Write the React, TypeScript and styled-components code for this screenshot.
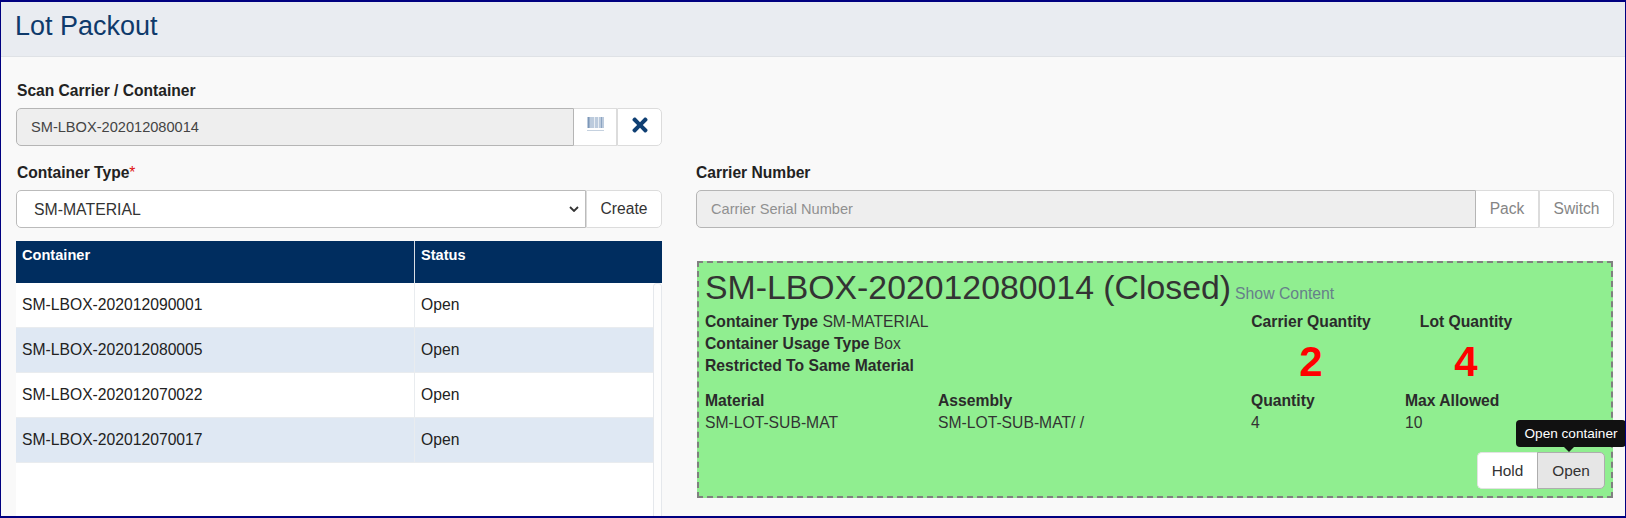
import React from "react";
import styled, { createGlobalStyle } from "styled-components";
import { FaTimes } from "react-icons/fa";

const GlobalStyle = createGlobalStyle`
    html, body {
        margin: 0;
        padding: 0;
        background: #fff;
    }
    * {
        box-sizing: border-box;
    }
    body {
        font-family: "Liberation Sans", Arial, sans-serif;
        font-size: 15.7px;
        color: #333;
    }
`;

const Page = styled.div`
    position: relative;
    width: 1626px;
    height: 518px;
    border: 1px solid #000080;
    border-width: 2px 1px 2px 1px;
    background: #f9f9f9;
    overflow: hidden;
`;

const Header = styled.header`
    height: 55px;
    padding: 6px 14px 0;
    background: #e9ecf1;
    border-bottom: 1px solid #dfe2e6;
`;

const Title = styled.h1`
    margin: 0;
    font-size: 27px;
    font-weight: 400;
    line-height: 36px;
    color: #0f3a6b;
`;

const Body = styled.main`
    padding: 24px 12px 0 15px;
`;

const ScanBlock = styled.section`
    width: 646px;
    margin-bottom: 17px;
`;

const Label = styled.label<{ $flush?: boolean }>`
    display: block;
    height: 20px;
    margin: 0 0 7px ${(p) => (p.$flush ? 0 : 1)}px;
    font-size: 15.6px;
    font-weight: 700;
    line-height: 20px;
    color: #222;
`;

const Required = styled.span`
    font-weight: 400;
    color: #e01010;
`;

const Columns = styled.div`
    display: grid;
    grid-template-columns: 646px 918px;
    column-gap: 34px;
`;

const InputGroup = styled.div`
    display: flex;
    height: 38px;
    background: #fff;
    border-radius: 5px;
`;

const ReadInput = styled.input`
    flex: 1;
    min-width: 0;
    height: 100%;
    padding: 0 14px;
    font: inherit;
    font-size: 14.6px;
    color: #444;
    background: #eee;
    border: 1px solid #b5b5b5;
    border-radius: 5px 0 0 5px;
    outline: none;

    &::placeholder {
        color: #909090;
        opacity: 1;
    }
`;

const AddonButton = styled.button<{ $width: number; $muted?: boolean; $last?: boolean }>`
    flex: none;
    display: flex;
    align-items: center;
    justify-content: center;
    width: ${(p) => p.$width}px;
    height: 100%;
    padding: 0;
    font: inherit;
    font-size: 15.6px;
    color: ${(p) => (p.$muted ? "#858585" : "#333")};
    background: #fff;
    border: 1px solid #dcdcdc;
    border-left: ${(p) => (p.$last ? "1px solid #dcdcdc" : "0")};
    border-radius: ${(p) => (p.$last ? "0 5px 5px 0" : "0")};
`;

const IconHolder = styled.span`
    display: flex;
    margin-top: -5px;
`;

const SelectWrap = styled.div`
    position: relative;
    display: flex;
    flex: 1;
    min-width: 0;
`;

const TypeSelect = styled.select`
    flex: 1;
    min-width: 0;
    height: 100%;
    padding: 0 24px 0 17px;
    font: inherit;
    font-size: 15.8px;
    color: #333;
    background: #fff;
    border: 1px solid #bbb;
    border-radius: 5px 0 0 5px;
    outline: none;
    appearance: none;
`;

const SelectChevron = styled.svg`
    position: absolute;
    top: 16px;
    right: 7px;
    pointer-events: none;
`;

const ListBlock = styled.div`
    margin-top: 13px;
`;

const TableHead = styled.div`
    display: grid;
    grid-template-columns: 399px 1fr;
    height: 42px;
    color: #fff;
    background: #002d5f;
    font-weight: 700;
    font-size: 14.6px;
`;

const HeadCell = styled.div<{ $divided?: boolean }>`
    padding: 5px 6px;
    line-height: 18px;
    border-right: ${(p) => (p.$divided ? "1px solid #d8dde4" : "0")};
`;

const TableBody = styled.div`
    display: flex;
    height: 250px;
    background: #fff;
`;

const Rows = styled.div`
    flex: 1;
`;

const Row = styled.div<{ $striped: boolean }>`
    display: grid;
    grid-template-columns: 399px 1fr;
    height: 45px;
    font-size: 15.7px;
    color: #222;
    background: ${(p) => (p.$striped ? "#dfe8f3" : "#fff")};
    border-bottom: 1px solid #e9ecef;
`;

const Cell = styled.div<{ $divided?: boolean }>`
    padding: 13px 6px 0;
    line-height: 18px;
    border-right: ${(p) => (p.$divided ? "1px solid #e9ecef" : "0")};
`;

const ScrollTrack = styled.div`
    width: 9px;
    background: #fdfdfd;
    border: 1px solid #e5e8ec;
    border-bottom: 0;
    border-radius: 4px 4px 0 0;
`;

const StatusCard = styled.section`
    position: relative;
    height: 237px;
    margin: 33px 1px 0 1px;
    padding: 4px 6px 0;
    background: #90ee90;
    border: 2px dashed #808080;
`;

const CardTitle = styled.div`
    display: flex;
    align-items: baseline;
    gap: 4px;
    height: 42px;
`;

const ContainerName = styled.span`
    font-size: 33.8px;
    line-height: 41px;
    color: #333;
`;

const ShowContent = styled.a`
    font-size: 15.8px;
    color: #66808a;
`;

const SummaryRow = styled.div`
    display: grid;
    grid-template-columns: 546px 155px 150px;
    height: 66px;
    margin-top: 2px;
`;

const InfoLine = styled.div`
    height: 22px;
    line-height: 22px;
    color: #333;
`;

const InfoKey = styled.b`
    color: #2b2b2b;
`;

const QuantityBox = styled.div<{ $width: number; $offset?: number }>`
    display: flex;
    flex-direction: column;
    align-items: center;
    width: ${(p) => p.$width}px;
    margin-left: ${(p) => p.$offset ?? 0}px;
    line-height: 22px;
    white-space: nowrap;
`;

const QuantityNumber = styled.div`
    margin-top: 7px;
    font-size: 42px;
    font-weight: 700;
    line-height: 44px;
    color: #f00;
`;

const DetailGrid = styled.div`
    display: grid;
    grid-template-columns: 233px 313px 154px 150px;
    grid-auto-rows: 22px;
    margin-top: 13px;
    line-height: 22px;
`;

const ActionGroup = styled.div`
    position: absolute;
    right: 6px;
    bottom: 7px;
    display: flex;
    height: 37px;
    font-size: 15.4px;
`;

const ActionButton = styled.button<{ $active?: boolean }>`
    width: ${(p) => (p.$active ? 68 : 60)}px;
    padding: 0;
    font: inherit;
    color: #333;
    background: ${(p) => (p.$active ? "#e6e6e6" : "#fff")};
    border: 1px solid ${(p) => (p.$active ? "#adadad" : "#e2e2e2")};
    border-right: 0;
    border-radius: 5px 0 0 5px;

    &:last-child {
        border-right: 1px solid #adadad;
        border-radius: 0 5px 5px 0;
    }
`;

const Tooltip = styled.div`
    position: absolute;
    left: 1515px;
    top: 418px;
    width: 110px;
    height: 27px;
    font-size: 13.6px;
    line-height: 27px;
    text-align: center;
    color: #fff;
    background: #111;
    border-radius: 4px;

    &::after {
        content: "";
        position: absolute;
        left: 48px;
        top: 27px;
        border: 5px solid transparent;
        border-top-color: #111;
        border-bottom: 0;
    }
`;

const containers = [
    "SM-LBOX-202012090001",
    "SM-LBOX-202012080005",
    "SM-LBOX-202012070022",
    "SM-LBOX-202012070017",
];

function BarcodeIcon() {
    return (
        <svg width="17" height="15" viewBox="0 0 17 15">
            <rect x="0" y="0" width="17" height="11" fill="#bccbdd" />
            <rect x="1" y="0" width="1.5" height="11" fill="#7d97b8" />
            <rect x="7" y="0" width="1" height="11" fill="#e8edf3" />
            <rect x="11" y="0" width="1" height="11" fill="#e8edf3" />
            <rect x="14" y="0" width="1" height="11" fill="#8ea5c2" />
            <rect x="0" y="13" width="17" height="1" fill="#c5d1df" />
        </svg>
    );
}

export default function App() {
    return (
        <>
            <GlobalStyle />
            <Page>
                <Header>
                    <Title>Lot Packout</Title>
                </Header>
                <Body>
                    <ScanBlock>
                        <Label>Scan Carrier / Container</Label>
                        <InputGroup>
                            <ReadInput readOnly value="SM-LBOX-202012080014" />
                            <AddonButton $width={43}>
                                <IconHolder>
                                    <BarcodeIcon />
                                </IconHolder>
                            </AddonButton>
                            <AddonButton $width={45} $last>
                                <IconHolder>
                                    <FaTimes size={22} color="#0f3f73" />
                                </IconHolder>
                            </AddonButton>
                        </InputGroup>
                    </ScanBlock>
                    <Columns>
                        <div>
                            <Label>
                                Container Type<Required>*</Required>
                            </Label>
                            <InputGroup>
                                <SelectWrap>
                                    <TypeSelect defaultValue="SM-MATERIAL">
                                        <option>SM-MATERIAL</option>
                                    </TypeSelect>
                                    <SelectChevron width="10" height="6" viewBox="0 0 10 6">
                                        <path
                                            d="M1 1l4 4 4-4"
                                            fill="none"
                                            stroke="#333"
                                            strokeWidth="1.8"
                                        />
                                    </SelectChevron>
                                </SelectWrap>
                                <AddonButton $width={76} $last>
                                    Create
                                </AddonButton>
                            </InputGroup>
                            <ListBlock>
                                <TableHead>
                                    <HeadCell $divided>Container</HeadCell>
                                    <HeadCell>Status</HeadCell>
                                </TableHead>
                                <TableBody>
                                    <Rows>
                                        {containers.map((name, i) => (
                                            <Row key={name} $striped={i % 2 === 1}>
                                                <Cell $divided>{name}</Cell>
                                                <Cell>Open</Cell>
                                            </Row>
                                        ))}
                                    </Rows>
                                    <ScrollTrack />
                                </TableBody>
                            </ListBlock>
                        </div>
                        <div>
                            <Label $flush>Carrier Number</Label>
                            <InputGroup>
                                <ReadInput readOnly placeholder="Carrier Serial Number" />
                                <AddonButton $width={63} $muted>
                                    Pack
                                </AddonButton>
                                <AddonButton $width={75} $muted $last>
                                    Switch
                                </AddonButton>
                            </InputGroup>
                            <StatusCard>
                                <CardTitle>
                                    <ContainerName>SM-LBOX-202012080014 (Closed)</ContainerName>
                                    <ShowContent>Show Content</ShowContent>
                                </CardTitle>
                                <SummaryRow>
                                    <div>
                                        <InfoLine>
                                            <InfoKey>Container Type</InfoKey> SM-MATERIAL
                                        </InfoLine>
                                        <InfoLine>
                                            <InfoKey>Container Usage Type</InfoKey> Box
                                        </InfoLine>
                                        <InfoLine>
                                            <InfoKey>Restricted To Same Material</InfoKey>
                                        </InfoLine>
                                    </div>
                                    <QuantityBox $width={120}>
                                        <InfoKey>Carrier Quantity</InfoKey>
                                        <QuantityNumber>2</QuantityNumber>
                                    </QuantityBox>
                                    <QuantityBox $width={92} $offset={14}>
                                        <InfoKey>Lot Quantity</InfoKey>
                                        <QuantityNumber>4</QuantityNumber>
                                    </QuantityBox>
                                </SummaryRow>
                                <DetailGrid>
                                    <InfoKey>Material</InfoKey>
                                    <InfoKey>Assembly</InfoKey>
                                    <InfoKey>Quantity</InfoKey>
                                    <InfoKey>Max Allowed</InfoKey>
                                    <span>SM-LOT-SUB-MAT</span>
                                    <span>SM-LOT-SUB-MAT/ /</span>
                                    <span>4</span>
                                    <span>10</span>
                                </DetailGrid>
                                <ActionGroup>
                                    <ActionButton>Hold</ActionButton>
                                    <ActionButton $active>Open</ActionButton>
                                </ActionGroup>
                            </StatusCard>
                        </div>
                    </Columns>
                </Body>
                <Tooltip>Open container</Tooltip>
            </Page>
        </>
    );
}
